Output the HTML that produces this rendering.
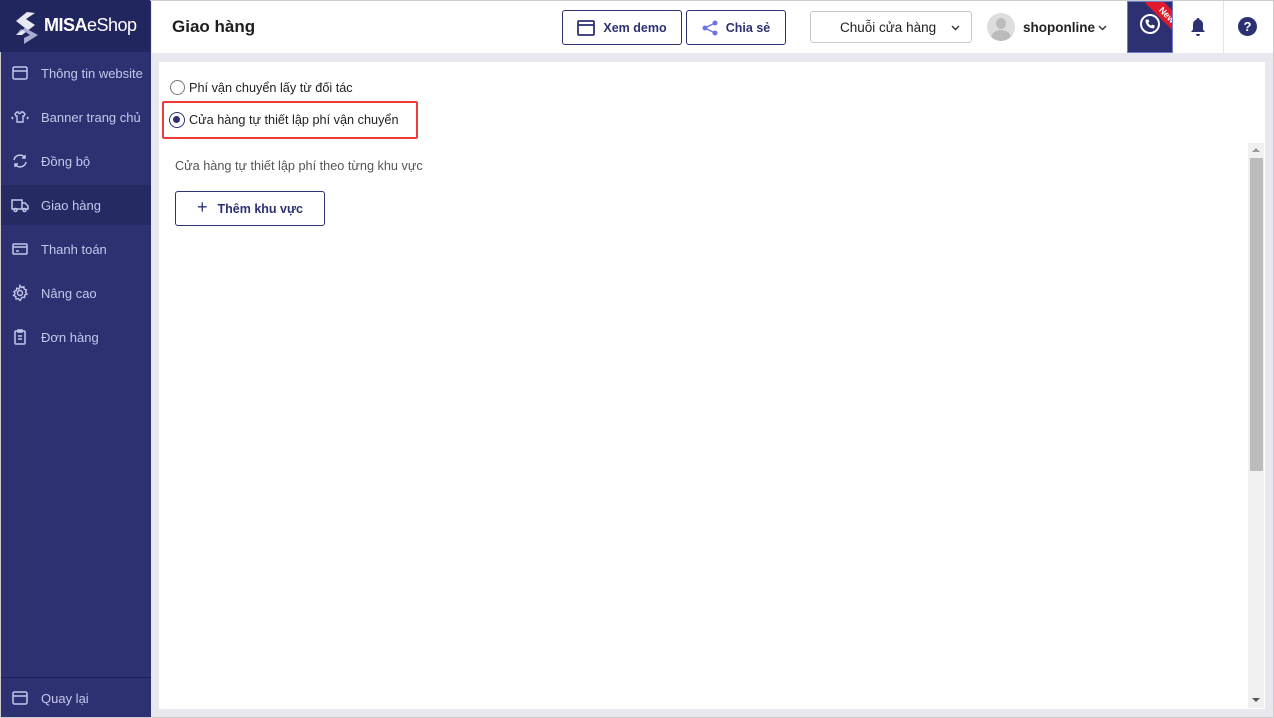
<!DOCTYPE html>
<html><head><meta charset="utf-8"><style>
*{box-sizing:border-box;margin:0;padding:0}
body{width:1274px;height:718px;overflow:hidden;background:#e8e8ee;font-family:"Liberation Sans",Arial,sans-serif;position:relative}
.abs{position:absolute}
.side{left:1px;top:1px;width:150px;height:716px;background:#2d3172}
.logo{left:0;top:0;width:150px;height:52px;background:#22265f}
.nav{left:0;width:150px;height:40px;color:#c4c7ea;font-size:13px;display:flex;align-items:center}
.nav svg{margin-left:11px;margin-right:12px}
.top{left:152px;top:1px;width:1121px;height:52px;background:#fff}
.btn{border:1px solid #2d3172;border-radius:3px;background:#fff;display:flex;align-items:center;justify-content:center;font-size:12.5px;font-weight:bold;color:#2d3172}
.card{left:159px;top:62px;width:1106px;height:647px;background:#fff}
.t{font-size:12.7px;color:#222}
</style></head><body>
<div class="abs" style="left:0;top:0;width:1274px;height:718px;border:1px solid #ccc"></div>
<div class="abs side"></div>
<div class="abs logo">
<svg class="abs" style="left:13px;top:11px" width="28" height="34" viewBox="0 0 28 34"><path d="M14 1 L3 10 L12 17 L3 24 L9 24 L22 14 L13 8 L22 2Z" fill="#e8e8f4"/><path d="M3 24 L12 17 L25 24 L11 33 L11 27 L17 24 L8 18Z" fill="#a9acd0"/></svg>
<div class="abs" style="left:44px;top:15px;color:#fff;font-size:18px;letter-spacing:-0.5px"><b>MISA</b>eShop</div>
</div>
<div class="abs" style="left:1px;top:185px;width:150px;height:40px;background:#252a63"></div>
<div class="abs nav" style="top:53px"><svg width="18" height="18" viewBox="0 0 18 18" fill="none" stroke="#c4c7ea" stroke-width="1.5"><rect x="2" y="3" width="14" height="12" rx="1.5"/><path d="M2 7h14"/></svg>Thông tin website</div>
<div class="abs nav" style="top:97px"><svg width="18" height="18" viewBox="0 0 18 18" fill="none" stroke="#c4c7ea" stroke-width="1.4"><path d="M6 4l-2 2 1 2h1v6h6V8h1l1-2-2-2h-2a1.5 1.5 0 01-3 0z"/><path d="M2 9l-1 1 1 1M16 9l1 1-1 1"/></svg>Banner trang chủ</div>
<div class="abs nav" style="top:141px"><svg width="18" height="18" viewBox="0 0 18 18" fill="none" stroke="#c4c7ea" stroke-width="1.5"><path d="M3 8a6 6 0 0111-2M15 10a6 6 0 01-11 2"/><path d="M14 3v3h-3M4 15v-3h3"/></svg>Đồng bộ</div>
<div class="abs nav" style="top:185px"><svg width="18" height="18" viewBox="0 0 18 18" fill="none" stroke="#c4c7ea" stroke-width="1.5"><path d="M1 4h10v9H1zM11 7h3l3 3v3h-6"/><circle cx="4.5" cy="14" r="1.5"/><circle cx="13.5" cy="14" r="1.5"/></svg>Giao hàng</div>
<div class="abs nav" style="top:229px"><svg width="18" height="18" viewBox="0 0 18 18" fill="none" stroke="#c4c7ea" stroke-width="1.5"><rect x="2" y="4" width="14" height="10" rx="1"/><path d="M2 7h14M5 11h3"/></svg>Thanh toán</div>
<div class="abs nav" style="top:273px"><svg width="18" height="18" viewBox="0 0 18 18" fill="none" stroke="#c4c7ea" stroke-width="1.4"><circle cx="9" cy="9" r="2.5"/><path d="M9 1.5l1.5 2 2.3-.8.4 2.4 2.3.9-1 2.2 1.5 1.8-2.2 1-.2 2.5-2.4-.3L9 16.5l-1.6-1.8-2.4.3-.2-2.5-2.2-1L4 9.7 3 7.5l2.3-.9.4-2.4 2.3.8z"/></svg>Nâng cao</div>
<div class="abs nav" style="top:317px"><svg width="18" height="18" viewBox="0 0 18 18" fill="none" stroke="#c4c7ea" stroke-width="1.5"><rect x="4" y="3" width="10" height="13" rx="1"/><path d="M7 2h4v2H7zM7 8h4M7 11h4"/></svg>Đơn hàng</div>
<div class="abs" style="left:1px;top:677px;width:150px;height:1px;background:#1a1d66"></div>
<div class="abs nav" style="top:678px"><svg width="18" height="18" viewBox="0 0 18 18" fill="none" stroke="#c4c7ea" stroke-width="1.5"><rect x="2" y="3" width="14" height="12" rx="1.5"/><path d="M2 7h14"/></svg>Quay lại</div>

<div class="abs top"></div>
<div class="abs" style="left:172px;top:17px;font-size:17px;font-weight:bold;color:#1e1e1e">Giao hàng</div>
<div class="abs btn" style="left:562px;top:10px;width:120px;height:35px"><svg width="18" height="16" viewBox="0 0 18 16" fill="none" stroke="#2d3172" stroke-width="1.8" style="margin-right:8px"><rect x="1" y="1" width="16" height="14" rx="1"/><path d="M1 5h16"/></svg>Xem demo</div>
<div class="abs btn" style="left:686px;top:10px;width:100px;height:35px"><svg width="16" height="16" viewBox="0 0 16 16" fill="#6d74e0" style="margin-right:8px"><circle cx="13" cy="3" r="2.5"/><circle cx="3" cy="8" r="2.5"/><circle cx="13" cy="13" r="2.5"/><path d="M13 3L3 8l10 5" stroke="#6d74e0" stroke-width="1.5" fill="none"/></svg>Chia sẻ</div>
<div class="abs" style="left:810px;top:11px;width:162px;height:32px;border:1px solid #c8c8c8;border-radius:3px;font-size:13.5px;color:#222;padding:8px 0 0 29px">Chuỗi cửa hàng</div>
<svg class="abs" style="left:951px;top:25px" width="9" height="6" viewBox="0 0 9 6"><path d="M1 1l3.5 3.5L8 1" fill="none" stroke="#333" stroke-width="1.4"/></svg>
<div class="abs" style="left:987px;top:13px;width:28px;height:28px;border-radius:50%;background:#ddd;overflow:hidden"><div class="abs" style="left:9px;top:5px;width:10px;height:11px;border-radius:50%;background:#bbb"></div><div class="abs" style="left:4px;top:17px;width:20px;height:16px;border-radius:50%;background:#bbb"></div></div>
<div class="abs" style="left:1023px;top:20px;font-size:13.5px;font-weight:bold;color:#222">shoponline</div>
<svg class="abs" style="left:1098px;top:25px" width="9" height="6" viewBox="0 0 9 6"><path d="M1 1l3.5 3.5L8 1" fill="none" stroke="#333" stroke-width="1.4"/></svg>
<div class="abs" style="left:1127px;top:1px;width:46px;height:52px;background:#2d3172;border:1px solid #6f7ccc;overflow:hidden">
<svg class="abs" style="left:11px;top:11px" width="22" height="22" viewBox="0 0 22 22"><circle cx="11" cy="11" r="9" fill="none" stroke="#fff" stroke-width="2"/><path d="M7.5 6.5l2 0 .8 2.3-1.2 1a6 6 0 003 3l1-1.2 2.4.8v2a1.2 1.2 0 01-1.3 1A8 8 0 016.5 7.8a1.2 1.2 0 011-1.3z" fill="#fff"/></svg>
<div class="abs" style="left:15px;top:6px;width:48px;height:14px;background:#e0192b;transform:rotate(45deg);color:#fff;font-size:9px;font-weight:bold;text-align:center;line-height:14px">New</div></div>
<svg class="abs" style="left:1189px;top:17px" width="18" height="20" viewBox="0 0 18 20"><path d="M9 1a1.5 1.5 0 011.5 1.5 5 5 0 013.5 5v5l2 2.5H2l2-2.5v-5a5 5 0 013.5-5A1.5 1.5 0 019 1zM7 17h4a2 2 0 01-4 0z" fill="#2d3172"/></svg>
<div class="abs" style="left:1223px;top:1px;width:1px;height:52px;background:#e4e4e4"></div>
<div class="abs" style="left:1238px;top:17px;width:19px;height:19px;border-radius:50%;background:#2d3172;color:#fff;font-weight:bold;font-size:13px;text-align:center;line-height:19px">?</div>

<div class="abs card"></div>
<div class="abs" style="left:170px;top:80px;width:15px;height:15px;border:1.5px solid #777;border-radius:50%"></div>
<div class="abs t" style="left:189px;top:81px">Phí vận chuyển lấy từ đối tác</div>
<div class="abs" style="left:162px;top:101px;width:256px;height:38px;border:2px solid #ef3b3b;border-radius:2px"></div>
<div class="abs" style="left:169px;top:112px;width:16px;height:16px;border:1.5px solid #2d3172;border-radius:50%"><div class="abs" style="left:3px;top:3px;width:7px;height:7px;border-radius:50%;background:#2d3172"></div></div>
<div class="abs t" style="left:189px;top:113px">Cửa hàng tự thiết lập phí vận chuyển</div>
<div class="abs" style="left:175px;top:159px;font-size:12.7px;color:#555">Cửa hàng tự thiết lập phí theo từng khu vực</div>
<div class="abs btn" style="left:175px;top:191px;width:150px;height:35px;font-size:12.5px"><span style="font-size:18px;font-weight:normal;margin-right:10px;margin-top:-2px">+</span>Thêm khu vực</div>
<div class="abs" style="left:1248px;top:143px;width:16px;height:565px;background:#f0f0f0"></div>
<div class="abs" style="left:1250px;top:158px;width:13px;height:313px;background:#bcbcbc"></div>
<div class="abs" style="left:1252px;top:148px;width:0;height:0;border-left:4px solid transparent;border-right:4px solid transparent;border-bottom:4px solid #999"></div>
<div class="abs" style="left:1252px;top:698px;width:0;height:0;border-left:4px solid transparent;border-right:4px solid transparent;border-top:4px solid #555"></div>
</body></html>
